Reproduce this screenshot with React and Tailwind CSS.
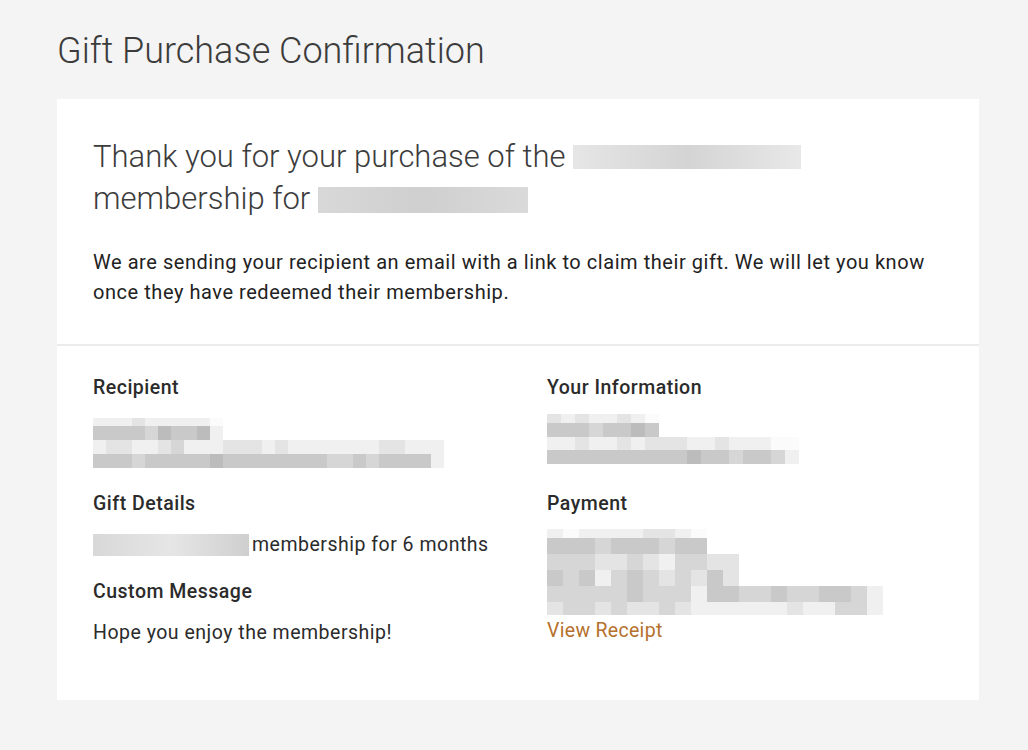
import React from 'react';

// shade lookup for the pixelated (redacted) blocks
const SHADES = {
  0: 'bg-[#fbfbfb]',
  1: 'bg-[#f0f0f0]',
  2: 'bg-[#e4e4e4]',
  3: 'bg-[#d6d6d6]',
  4: 'bg-[#c9c9c9]',
  5: 'bg-[#bcbcbc]',
};

const Mosaic = ({ rows, cell = 'w-[14px]' }) => (
  <div className="flex flex-col">
    {rows.map((row, r) => (
      <div key={r} className={`flex ${row.h}`}>
        {row.cells.split('').map((c, i) => (
          <div key={i} className={`${cell} h-full ${SHADES[c]}`} />
        ))}
      </div>
    ))}
  </div>
);

const Label = ({ children }) => (
  <h4 className="text-[19.5px] font-medium tracking-[0.5px] text-[#2b2b2b] leading-6">{children}</h4>
);

const recipientRows = [
  { h: 'h-[8px]', cells: '1112111110' },
  { h: 'h-[14px]', cells: '4444354451' },
  { h: 'h-[14px]', cells: '122112311122212111111122111' },
  { h: 'h-[14px]', cells: '444344444544444444334344441' },
];

const yourInfoRows = [
  { h: 'h-[9px]', cells: '21211210' },
  { h: 'h-[14px]', cells: '44434454' },
  { h: 'h-[13px]', cells: '112112122211211100' },
  { h: 'h-[14px]', cells: '444444444454434431' },
];

const paymentRows = [
  { h: 'h-[9px]', cells: '1011112210' },
  { h: 'h-[16px]', cells: '4443444344' },
  { h: 'h-[16px]', cells: '333223213322' },
  { h: 'h-[16px]', cells: '434134323242' },
  { h: 'h-[16px]', cells: '333334333144334334431' },
  { h: 'h-[13px]', cells: '233232232111111211331' },
];

const App = () => {
  return (
    <div className="min-h-[750px] bg-[#f4f4f4] px-[57px] pt-[28px] font-['Roboto',sans-serif] text-[#333]">
      <h1 className="text-[36px] font-light text-[#3c3c3c] leading-[46px]">Gift Purchase Confirmation</h1>

      <div className="mt-[25px] w-[922px] bg-white">
        {/* summary */}
        <div className="px-9 pt-[37px] pb-[37px]">
          <h2 className="text-[31px] font-light leading-[42px] text-[#3c3c3c]">
            Thank you for your purchase of the{' '}
            <span className="inline-block h-[24px] w-[228px] translate-y-[2px] bg-gradient-to-r from-[#e6e6e6] via-[#d4d4d4] to-[#e8e8e8]" />
            <br />
            membership for{' '}
            <span className="inline-block h-[26px] w-[210px] translate-y-[4px] bg-gradient-to-r from-[#d8d8d8] via-[#cfcfcf] to-[#dadada]" />
          </h2>
          <p className="mt-[27px] text-[20px] leading-[30px] text-[#222] tracking-[0.55px]">
            We are sending your recipient an email with a link to claim their gift. We will let you know
            <br />
            once they have redeemed their membership.
          </p>
        </div>

        <div className="border-t-2 border-[#ececec]" />

        {/* details */}
        <div className="grid grid-cols-[454px_1fr] px-9 pt-[30px] pb-[55px]">
          <div className="flex flex-col">
            <Label>Recipient</Label>
            <div className="mt-[18px]">
              <Mosaic rows={recipientRows} cell="w-[13px]" />
            </div>
            <div className="mt-[24px]">
              <Label>Gift Details</Label>
            </div>
            <div className="mt-[17px] flex items-center text-[19.5px] tracking-[0.5px] leading-6 text-[#2b2b2b]">
              <span className="mr-[3px] inline-flex h-[22px] w-[156px] bg-gradient-to-r from-[#d8d8d8] via-[#e6e6e6] to-[#cfcfcf]" />
              membership for 6 months
            </div>
            <div className="mt-[23px]">
              <Label>Custom Message</Label>
            </div>
            <p className="mt-[17px] text-[19.5px] tracking-[0.5px] leading-6 text-[#2b2b2b]">Hope you enjoy the membership!</p>
          </div>

          <div className="flex flex-col">
            <Label>Your Information</Label>
            <div className="mt-[14px]">
              <Mosaic rows={yourInfoRows} />
            </div>
            <div className="mt-[28px]">
              <Label>Payment</Label>
            </div>
            <div className="mt-[13px]">
              <Mosaic rows={paymentRows} cell="w-[16px]" />
            </div>
            <a href="#" className="mt-[4px] text-[19.5px] tracking-[0.3px] leading-6 text-[#b5712e]">View Receipt</a>
          </div>
        </div>
      </div>
    </div>
  );
};

export default App;
